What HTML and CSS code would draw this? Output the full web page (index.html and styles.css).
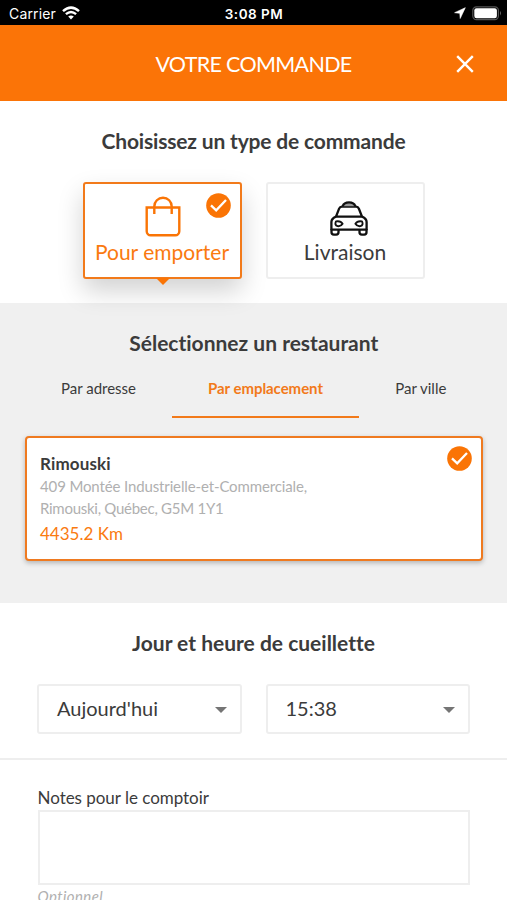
FILE: index.html
```html
<!DOCTYPE html>
<html lang="fr">
<head>
<meta charset="utf-8">
<title>Votre commande</title>
<link rel="stylesheet" href="styles.css">
</head>
<body>
<div class="status">
  <div class="status-left">
    <span class="carrier">Carrier</span>
    <svg class="wifi" width="18" height="14" viewBox="0 0 18 14"><path d="M1 5.1Q9-1.9 17 5.1" fill="none" stroke="#fff" stroke-width="2.5"/><path d="M3.9 8.2Q9 3.7 14.1 8.2" fill="none" stroke="#fff" stroke-width="2.4"/><path d="M6.2 10.6Q9 8.2 11.8 10.6L9 13.6z" fill="#fff"/></svg>
  </div>
  <span class="clock">3:08 PM</span>
  <div class="status-right">
    <svg width="12" height="12" viewBox="0 0 12 12"><path d="M11.3.7L.6 5.7l5.2.6.4 5.2z" fill="#fff" stroke="#fff" stroke-width=".6"/></svg>
    <svg width="30" height="15" viewBox="0 0 30 15"><rect x=".8" y=".8" width="25.6" height="12.9" rx="3.6" fill="none" stroke="#555" stroke-width="1.2"/><rect x="2.3" y="2.3" width="22.6" height="9.9" rx="2.2" fill="#fff"/><path d="M28 5q2 2.2 0 4.4z" fill="#666"/></svg>
  </div>
</div>
<header class="header">
  <h1>VOTRE COMMANDE</h1>
  <svg class="close" width="18" height="18" viewBox="0 0 18 18"><path d="M1.2 1.2l15.6 15.6M16.8 1.2L1.2 16.8" stroke="#fff" stroke-width="2.4"/></svg>
</header>

<section class="types">
  <h2 class="w-type">Choisissez un type de commande</h2>
  <div class="type-row">
    <div class="type selected">
      <svg class="bag" width="36" height="41" viewBox="0 0 36 41" fill="none" stroke="#fa7405" stroke-width="2.4"><path d="M1.7 11.5h32.6v23.7a4 4 0 0 1-4 4H5.7a4 4 0 0 1-4-4z"/><path d="M9.3 18v-7.6a8.7 8.7 0 0 1 17.4 0V18"/></svg>
      <span>Pour emporter</span>
      <svg class="check" width="25" height="25" viewBox="0 0 25 25"><circle cx="12.5" cy="12.5" r="12.3" fill="#fa7405"/><path d="M5 12.4l5.2 5L20 7" fill="none" stroke="#fff" stroke-width="2.3"/></svg>
      <i class="pointer"></i>
    </div>
    <div class="type">
      <svg class="taxi" width="38" height="35" viewBox="0 0 38 35" fill="none" stroke="#111" stroke-width="2.3" stroke-linejoin="round"><path d="M6 15.6L9.1 7.7Q9.9 5.7 12.1 5.7h13.8q2.2 0 3 2L32 15.6z"/><path d="M12.6 5.3Q14 1.4 19 1.4t6.4 3.9" fill="#999"/><path d="M6 15.6Q1.4 17.5 1.4 21v7.6h35.2V21q0-3.5-4.6-5.4"/><path d="M1.5 28v3.3q0 2.3 2.3 2.3h2.4q2.3 0 2.3-2.3V29M29.5 29v2.3q0 2.3 2.3 2.3h2.4q2.3 0 2.3-2.3V28"/><path d="M6 20.4q4.6-.8 6.6 2.3-1.8 2.9-5 2.4-3.4-1.2-1.6-4.7zM32 20.4q-4.6-.8-6.6 2.3 1.8 2.9 5 2.4 3.4-1.2 1.6-4.7z" stroke-width="1.9"/></svg>
      <span>Livraison</span>
    </div>
  </div>
</section>

<section class="place">
  <h2 class="w-place">Sélectionnez un restaurant</h2>
  <nav class="tabs">
    <span class="tab">Par adresse</span>
    <span class="tab active">Par emplacement</span>
    <span class="tab">Par ville</span>
  </nav>
  <article class="restaurant">
    <div class="details">
      <h3>Rimouski</h3>
      <p class="address">409 Montée Industrielle-et-Commerciale,<br><span class="city">Rimouski, Québec, G5M 1Y1</span></p>
      <p class="distance">4435.2 Km</p>
    </div>
    <svg class="mark" width="25" height="25" viewBox="0 0 25 25"><circle cx="12.5" cy="12.5" r="12.3" fill="#fa7405"/><path d="M5 12.4l5.2 5L20 7" fill="none" stroke="#fff" stroke-width="2.3"/></svg>
  </article>
</section>

<section class="time">
  <h2 class="w-time">Jour et heure de cueillette</h2>
  <div class="selects">
    <div class="select"><span>Aujourd'hui</span><i class="caret"></i></div>
    <div class="select"><span>15:38</span><i class="caret"></i></div>
  </div>
</section>

<section class="notes">
  <label for="notes">Notes pour le comptoir</label>
  <textarea id="notes"></textarea>
  <em>Optionnel</em>
</section>
</body>
</html>
```
FILE: styles.css
```css
* { box-sizing: border-box; margin: 0; padding: 0; }
html, body { height: 900px; overflow: hidden; }
body { background: #fff; font-family: Lato, sans-serif; color: #3b3b3b; font-variant-ligatures: none; }
svg { display: block; flex: none; }

.status { height: 25px; padding: 3px 5px 0 9px; background: #000; color: #fff; display: grid; grid-template-columns: 1fr auto 1fr; align-items: center; font: 400 14px/22px Inter, sans-serif; }
.status-left, .status-right { display: flex; align-items: center; }
.carrier { width: 53px; letter-spacing: .15px; }
.status-right { justify-content: flex-end; gap: 6px; }
.status-right svg, .wifi { position: relative; top: -1px; }
.clock { font-weight: 600; font-size: 13.5px; letter-spacing: .5px; padding-right: 3px; }

.header { height: 76px; background: #fb7407; color: #fff; display: grid; grid-template-columns: 60px 1fr 60px; align-items: center; padding-top: 1px; }
.header h1 { grid-column: 2; text-align: center; font-size: 21.5px; line-height: 28px; font-weight: 400; letter-spacing: -.68px; }
.close { margin-left: 9px; }

h2 { text-align: center; font-size: 21px; line-height: 26px; font-weight: 700; }
.w-type { letter-spacing: -.17px; }

.types { height: 202px; padding-top: 27px; }
.type-row { display: flex; justify-content: center; gap: 24px; margin-top: 28px; }
.type { position: relative; width: 159px; height: 96.5px; border: 2px solid #eee; border-radius: 3px; background: #fff; display: flex; flex-direction: column; align-items: center; justify-content: flex-end; font-size: 21px; line-height: 26px; padding-bottom: 11.5px; }
.type.selected { border: 2px solid #f27a1a; color: #fa7a10; box-shadow: 0 12px 26px rgba(0,0,0,.18); }
.bag { margin: 0 0 2px 2px; }
.taxi { margin: 0 0 3px 7px; }
.check { position: absolute; top: 9px; right: 9px; }
.pointer { position: absolute; left: 71px; top: 94px; border: 7px solid transparent; border-top-color: #fa7405; border-bottom: 0; }

.place { position: relative; z-index: -1; height: 300px; background: #f0f0f0; padding: 27px 24.5px 0 25px; }
.tabs { display: grid; grid-template-columns: 147px 187px 1fr; height: 61px; margin-top: 4px; }
.tab { text-align: center; font-size: 15px; line-height: 18px; padding-top: 19px; }
.tab.active { color: #f27a1a; font-weight: 700; border-bottom: 2.5px solid #f27a1a; height: 57.5px; letter-spacing: -.05px; }
.restaurant { height: 125px; margin-top: 15px; background: #fff; border: 2px solid #ef7a20; border-radius: 4px; box-shadow: 0 2px 5px rgba(0,0,0,.25); display: flex; justify-content: space-between; padding: 14px 9px 0 13px; }
h3 { font-size: 17px; line-height: 24px; font-weight: 700; letter-spacing: .15px; }
.address { font-size: 15px; line-height: 22px; margin-top: -1px; color: #b0b0b0; letter-spacing: -.13px; }
.city { letter-spacing: -.27px; }
.distance { font-size: 17px; line-height: 24px; margin-top: 3px; color: #fa7a10; }
.mark { margin-top: -6px; }

.time { height: 157px; padding: 27px 37px 0; border-bottom: 2px solid #eee; }
.selects { display: flex; gap: 24px; margin-top: 28px; }
.select { flex: 1; height: 50px; border: 2px solid #eee; border-radius: 3px; display: flex; align-items: center; justify-content: space-between; padding: 0 13px 2px 18px; font-size: 20px; }
.caret { border: 6px solid transparent; border-top-color: #757575; border-bottom: 0; margin-top: 3px; }

.notes { padding: 26px 37px 0 37.5px; }
.notes label { display: block; font-size: 17px; line-height: 24px; letter-spacing: -.03px; }
.notes textarea { display: block; width: 100%; height: 75px; border: 2px solid #eee; resize: none; background: #fff; }
.notes em { display: block; font-size: 15px; line-height: 20px; margin-top: 1px; color: #b0b0b0; letter-spacing: .4px; }
```
